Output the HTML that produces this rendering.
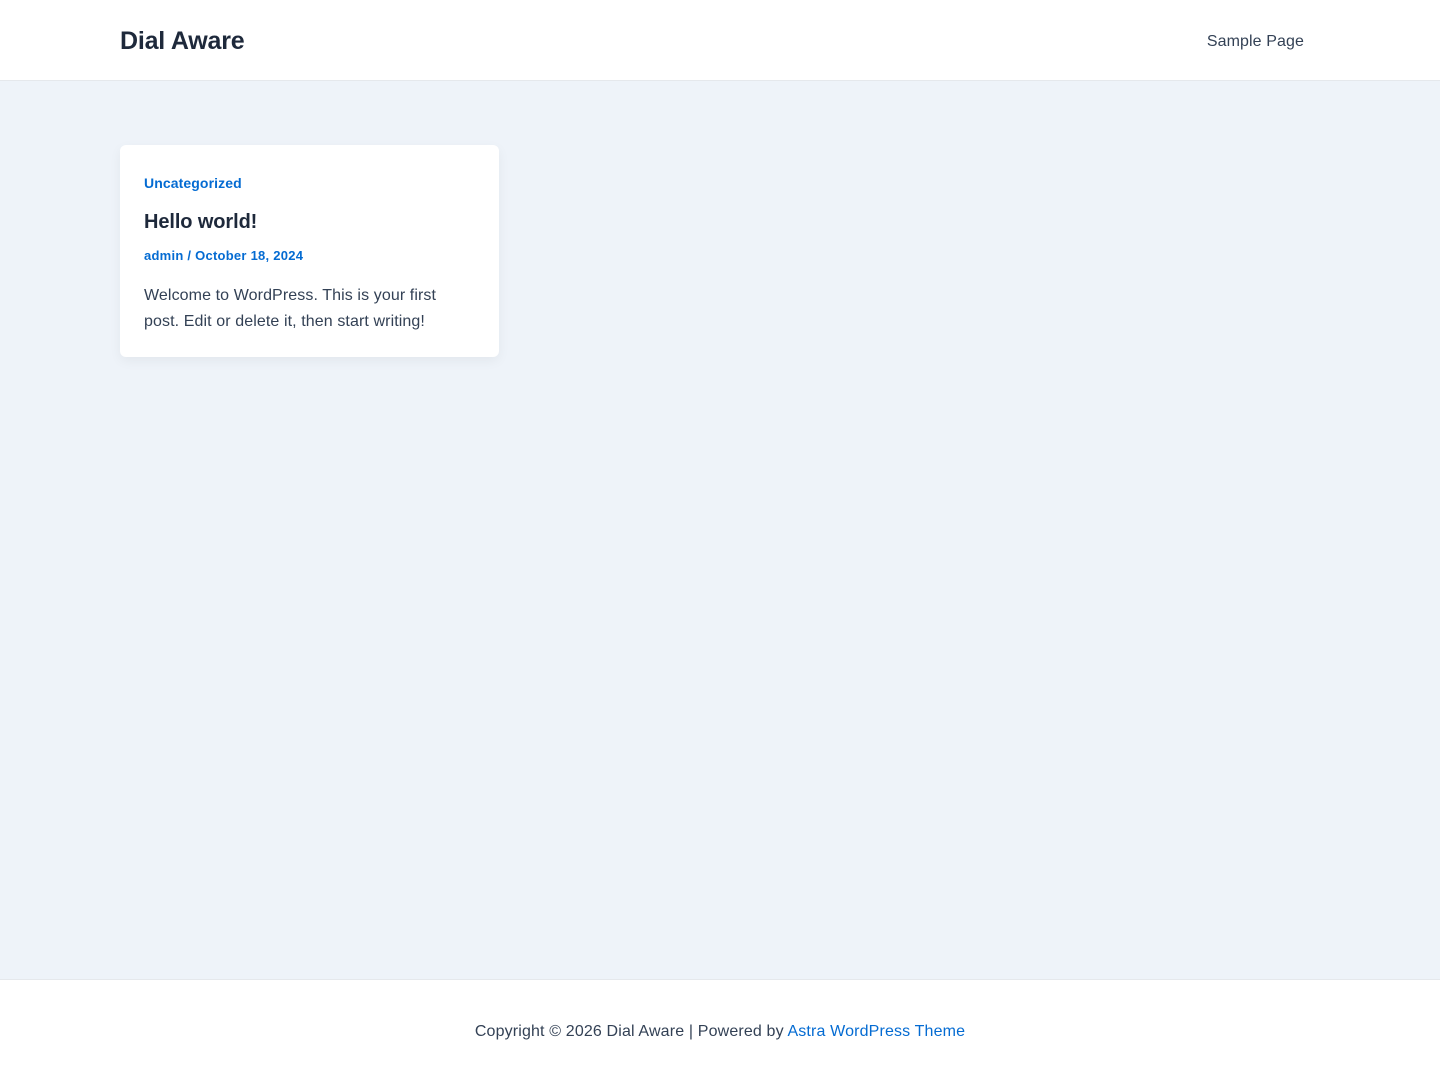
<!DOCTYPE html>
<html><head><meta charset="utf-8"><style>
*{margin:0;padding:0;box-sizing:border-box}
body{width:1440px;height:1080px;background:#eef3f9;font-family:"Liberation Sans",sans-serif;position:relative;overflow:hidden}
header{position:absolute;top:0;left:0;width:1440px;height:81px;background:#fff;border-bottom:1px solid #e5e8ec}
.logo{position:absolute;left:120px;top:27px;font-size:25px;font-weight:bold;color:#1e293b;letter-spacing:-0.2px}
.nav{position:absolute;right:136px;top:33px;font-size:16px;color:#334155;letter-spacing:0.1px}
.card{position:absolute;left:120px;top:145px;width:379px;height:212px;background:#fff;border-radius:6px;box-shadow:0 4px 12px rgba(0,0,0,.05)}
.cat{position:absolute;left:24px;top:30px;font-size:14px;font-weight:bold;color:#046bd2;letter-spacing:0.1px}
.title{position:absolute;left:24px;top:66px;font-size:20px;font-weight:bold;color:#1e293b;letter-spacing:-0.1px}
.meta{position:absolute;left:24px;top:103px;font-size:13px;font-weight:bold;color:#046bd2;letter-spacing:0.25px}
.ex{position:absolute;left:24px;top:138px;width:330px;font-size:16px;line-height:26px;color:#334155;letter-spacing:0.1px}
footer{position:absolute;top:979px;left:0;width:1440px;height:101px;background:#fff;border-top:1px solid #e5e8ec;text-align:center;padding-top:43px;font-size:16px;color:#334155;letter-spacing:0.15px}
footer span{color:#046bd2}
</style></head><body>
<header><div class="logo">Dial Aware</div><div class="nav">Sample Page</div></header>
<div class="card"><div class="cat">Uncategorized</div><div class="title">Hello world!</div><div class="meta">admin / October 18, 2024</div><div class="ex">Welcome to WordPress. This is your first post. Edit or delete it, then start writing!</div></div>
<footer>Copyright © 2026 Dial Aware | Powered by <span>Astra WordPress Theme</span></footer>
</body></html>
